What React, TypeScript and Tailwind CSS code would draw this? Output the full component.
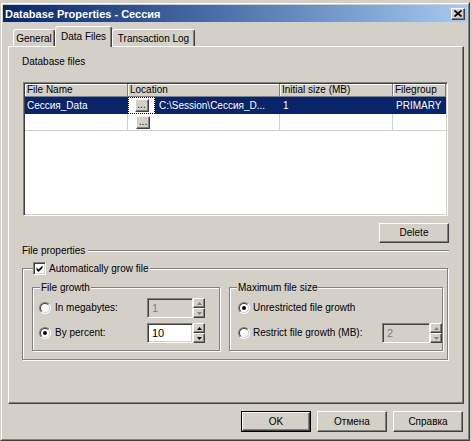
import React from "react";

// classic 3D borders
const raised =
  "border border-t-white border-l-white border-r-[#404040] border-b-[#404040] shadow-[inset_-1px_-1px_0_#808080]";
const sunken =
  "border border-t-[#808080] border-l-[#808080] border-r-white border-b-white shadow-[inset_1px_1px_0_#404040,inset_-1px_-1px_0_#d4d0c8]";
const etched = "border border-[#808080] shadow-[inset_1px_1px_0_#fff,1px_1px_0_#fff]";

function Radio({ checked }: { checked?: boolean }) {
  return (
    <div className="w-[12px] h-[12px] shrink-0 rounded-full border border-t-[#808080] border-l-[#808080] border-r-white border-b-white">
      <div className="w-full h-full rounded-full border border-t-[#404040] border-l-[#404040] border-r-[#d4d0c8] border-b-[#d4d0c8] bg-white flex items-center justify-center">
        {checked && <div className="w-[4px] h-[4px] rounded-full bg-black" />}
      </div>
    </div>
  );
}

function Checkbox({ checked }: { checked?: boolean }) {
  return (
    <div className={`w-[13px] h-[13px] shrink-0 bg-white flex items-center justify-center ${sunken}`}>
      {checked && (
        <svg width="9" height="9" viewBox="0 0 9 9">
          <path d="M1.5 3.5 L3.5 5.5 L7.5 1.5 L7.5 4 L3.5 8 L1.5 6 Z" fill="#000" />
        </svg>
      )}
    </div>
  );
}

function SpinBtn({ up, color }: { up?: boolean; color: string }) {
  return (
    <div className={`flex-1 bg-[#d4d0c8] flex items-center justify-center ${raised}`}>
      <svg width="5" height="3" viewBox="0 0 5 3">
        <path d={up ? "M2.5 0 L5 3 L0 3 Z" : "M0 0 L5 0 L2.5 3 Z"} fill={color} />
      </svg>
    </div>
  );
}

function Spin({ disabled }: { disabled?: boolean }) {
  const c = disabled ? "#808080" : "#000";
  return (
    <div className="flex flex-col w-[12px] h-[20px]">
      <SpinBtn up color={c} />
      <SpinBtn color={c} />
    </div>
  );
}

function Edit({ value, disabled, width }: { value: string; disabled?: boolean; width: string }) {
  return (
    <div
      className={`${width} h-[20px] pl-[4px] flex items-center text-[11px] ${sunken} ${
        disabled ? "bg-[#d4d0c8] text-[#808080]" : "bg-white text-black"
      }`}
    >
      {value}
    </div>
  );
}

function Button({ label, isDefault }: { label: string; isDefault?: boolean }) {
  const inner = (
    <div className={`w-full h-full flex items-center justify-center bg-[#d4d0c8] ${raised}`}>{label}</div>
  );
  if (isDefault) {
    return <div className="w-[70px] h-[21px] border border-black">{inner}</div>;
  }
  return <div className="w-[70px] h-[21px]">{inner}</div>;
}

function EllipsisBtn() {
  return (
    <div className={`w-[14px] h-[13px] bg-[#d4d0c8] flex items-end justify-center leading-[9px] pb-[2px] ${raised}`}>
      ...
    </div>
  );
}

const cols = ["w-[103px]", "w-[152px]", "w-[113px]", "flex-1"];
const headers = ["File Name", "Location", "Initial size (MB)", "Filegroup"];

function FilesGrid() {
  return (
    <div className={`ml-[1px] w-[425px] h-[134px] bg-white p-px ${sunken}`}>
      <div className="flex h-[13px] bg-[#d4d0c8]">
        {headers.map((h, i) => (
          <div
            key={h}
            className={`${cols[i]} pl-[2px] flex items-center border-r border-b border-r-[#808080] border-b-[#808080] shadow-[inset_1px_1px_0_#fff]`}
          >
            {h}
          </div>
        ))}
      </div>

      <div className="flex h-[17px] bg-[#0a246a] text-white">
        <div className={`${cols[0]} pl-[2px] flex items-center`}>Сессия_Data</div>
        <div className={`${cols[1]} flex items-center`}>
          <div className="w-[27px] h-full bg-white border border-dotted border-black flex items-center justify-center text-black">
            <EllipsisBtn />
          </div>
          <span className="pl-[4px]">C:\Session\Сессия_D...</span>
        </div>
        <div className={`${cols[2]} pl-[3px] flex items-center`}>1</div>
        <div className={`${cols[3]} pl-[3px] flex items-center`}>PRIMARY</div>
      </div>

      <div className="flex h-[17px] border-b border-b-[#d4d0c8]">
        <div className={`${cols[0]} border-r border-r-[#d4d0c8]`} />
        <div className={`${cols[1]} border-r border-r-[#d4d0c8] flex items-center pl-[8px]`}>
          <EllipsisBtn />
        </div>
        <div className={`${cols[2]} border-r border-r-[#d4d0c8]`} />
        <div className={cols[3]} />
      </div>
    </div>
  );
}

function FileGrowthBox() {
  return (
    <div className={`w-[188px] h-[64px] ${etched}`}>
      <div className="ml-[7px] -mt-[6px] w-fit px-px h-[12px] leading-[12px] bg-[#d4d0c8]">File growth</div>
      <div className="mt-[4px] pl-[6px] flex items-center h-[20px]">
        <Radio />
        <span className="ml-[4px] w-[92px]">In megabytes:</span>
        <Edit value="1" disabled width="w-[46px]" />
        <Spin disabled />
      </div>
      <div className="mt-[5px] pl-[6px] flex items-center h-[20px]">
        <Radio checked />
        <span className="ml-[4px] w-[92px]">By percent:</span>
        <Edit value="10" width="w-[46px]" />
        <Spin />
      </div>
    </div>
  );
}

function MaxSizeBox() {
  return (
    <div className={`w-[214px] h-[64px] ${etched}`}>
      <div className="ml-[7px] -mt-[6px] w-fit px-px h-[12px] leading-[12px] bg-[#d4d0c8]">Maximum file size</div>
      <div className="mt-[4px] pl-[8px] flex items-center h-[20px]">
        <Radio checked />
        <span className="ml-[3px]">Unrestricted file growth</span>
      </div>
      <div className="mt-[5px] pl-[8px] flex items-center h-[20px]">
        <Radio />
        <span className="ml-[3px] w-[129px]">Restrict file growth (MB):</span>
        <Edit value="2" disabled width="w-[48px]" />
        <Spin disabled />
      </div>
    </div>
  );
}

function Tab({ label, width, selected }: { label: string; width: string; selected?: boolean }) {
  if (selected) {
    return (
      <div
        className={`${width} h-[21px] -mb-px relative z-10 bg-[#d4d0c8] rounded-t-[3px] border-t border-l border-r border-t-white border-l-white border-r-[#404040] shadow-[inset_-1px_0_0_#808080] flex items-start justify-center pt-[4px]`}
      >
        {label}
      </div>
    );
  }
  return (
    <div
      className={`${width} h-[17px] bg-[#d4d0c8] rounded-t-[3px] border-t border-l border-r border-t-white border-l-white border-r-[#404040] shadow-[inset_-1px_0_0_#808080] flex items-start justify-center pt-[3px]`}
    >
      {label}
    </div>
  );
}

export default function App() {
  return (
    <div className="w-[472px] h-[441px] overflow-hidden bg-[#d4d0c8] font-['Liberation_Sans',Arial,sans-serif] text-[10px] leading-[12px] text-black">
      <div className="mt-[2px] w-[470px] h-[439px] border border-t-[#d4d0c8] border-l-[#d4d0c8] border-r-[#404040] border-b-[#404040]">
        <div className="w-full h-full p-px border border-t-white border-l-white border-r-[#808080] border-b-[#808080]">
          {/* title bar */}
          <div className="h-[17px] bg-linear-to-r from-[#0a246a] to-[#a6caf0] flex items-center justify-between pl-[2px] pr-[2px]">
            <span className="text-white font-bold text-[11px]">Database Properties - Сессия</span>
            <div className={`w-[14px] h-[12px] bg-[#d4d0c8] flex items-center justify-center ${raised}`}>
              <svg width="8" height="7" viewBox="0 0 8 7">
                <path d="M0.5 0.5 L7.5 6.5 M7.5 0.5 L0.5 6.5" stroke="#000" strokeWidth="1.7" />
              </svg>
            </div>
          </div>

          <div className="ml-[5px]">
            {/* tabs */}
            <div className="mt-[4px] pl-[5px] flex items-end">
              <Tab label="General" width="w-[42px]" />
              <Tab label="Data Files" width="w-[57px]" selected />
              <Tab label="Transaction Log" width="w-[83px]" />
            </div>

            {/* tab panel */}
            <div className="w-[456px] h-[358px] border border-t-white border-l-white border-r-[#404040] border-b-[#404040] shadow-[inset_-1px_-1px_0_#808080]">
              <div className="w-[427px] ml-[13px] pt-[9px] flex flex-col">
                <div className="h-[12px]">Database files</div>
                <div className="mt-[14px]">
                  <FilesGrid />
                </div>
                <div className="mt-[7px] self-end">
                  <div className={`w-[70px] h-[20px] flex items-center justify-center ${raised}`}>Delete</div>
                </div>

                <div className="mt-[2px] h-[12px] flex items-center">
                  <span className="pr-[3px]">File properties</span>
                  <div className="flex-1 h-[2px] border-t border-b border-t-[#808080] border-b-white" />
                </div>

                <div className={`mt-[11px] w-[426px] h-[92px] ${etched}`}>
                  <div className="ml-[10px] -mt-[7px] w-fit pr-[2px] bg-[#d4d0c8] flex items-center h-[13px]">
                    <Checkbox checked />
                    <span className="ml-[3px]">Automatically grow file</span>
                  </div>
                  <div className="mt-[12px] ml-[9px] flex gap-[9px]">
                    <FileGrowthBox />
                    <MaxSizeBox />
                  </div>
                </div>
              </div>
            </div>

            {/* dialog buttons */}
            <div className="mt-[7px] w-[455px] flex justify-end gap-[6px]">
              <Button label="OK" isDefault />
              <Button label="Отмена" />
              <Button label="Справка" />
            </div>
          </div>
        </div>
      </div>
    </div>
  );
}
